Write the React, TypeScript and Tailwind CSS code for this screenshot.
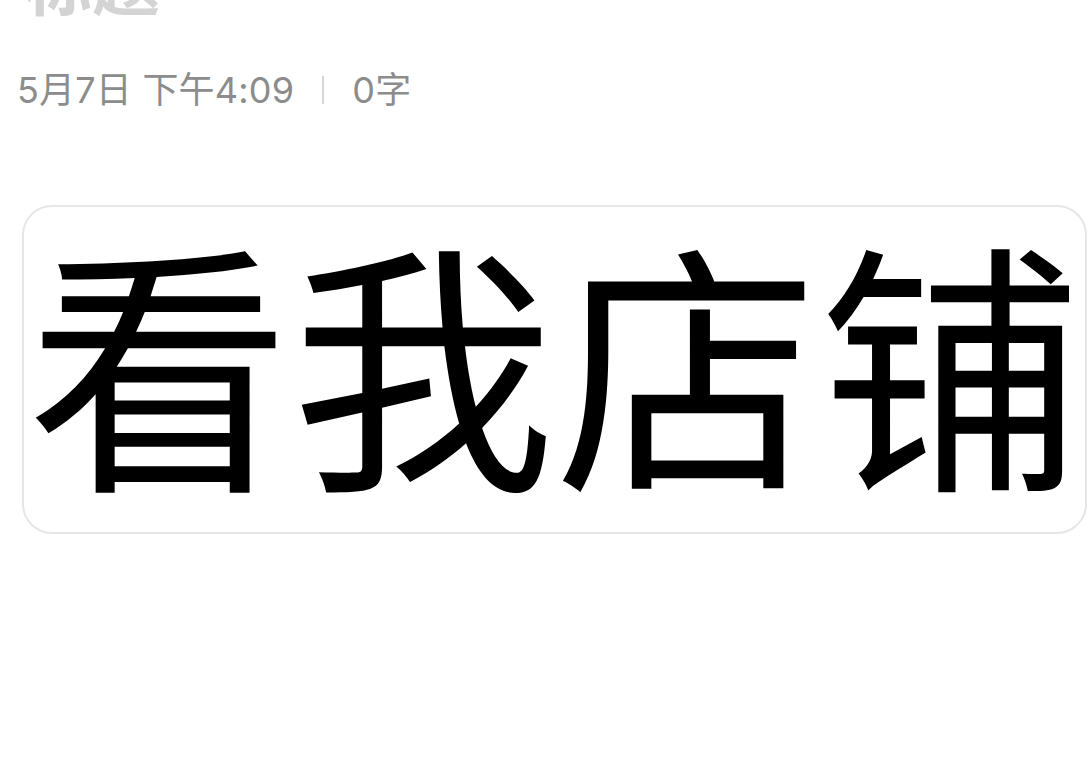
export default function App() {
  return (
    <div
      className="h-[767px] w-[1087px] overflow-hidden bg-white"
      style={{ fontFamily: '"Noto Sans CJK SC", "Noto Sans", sans-serif' }}
    >
      <div className="pl-[24px] mt-[-53px] text-[68px] font-bold leading-none text-[#d4d4d4]">
        标题
      </div>

      <div
        className="mt-[57px] flex items-center pl-[17px] text-[36px] leading-none tracking-[0.2px] text-[#8c8c8c]"
        style={{ fontFamily: 'Inter, "Noto Sans CJK SC", sans-serif' }}
      >
        <span>5月7日 下午4:09</span>
        <span className="mx-[28px] h-[28px] w-[2px] bg-[#d6d6d6]" />
        <span>0字</span>
      </div>

      <div className="ml-[22px] mt-[97px] w-[1065px] overflow-hidden rounded-[30px] border-2 border-[#e6e6e6] pl-[3px] pt-[17px] pb-[44px]">
        <div className="whitespace-nowrap text-[264px] leading-none text-black">看我店铺</div>
      </div>
    </div>
  )
}
